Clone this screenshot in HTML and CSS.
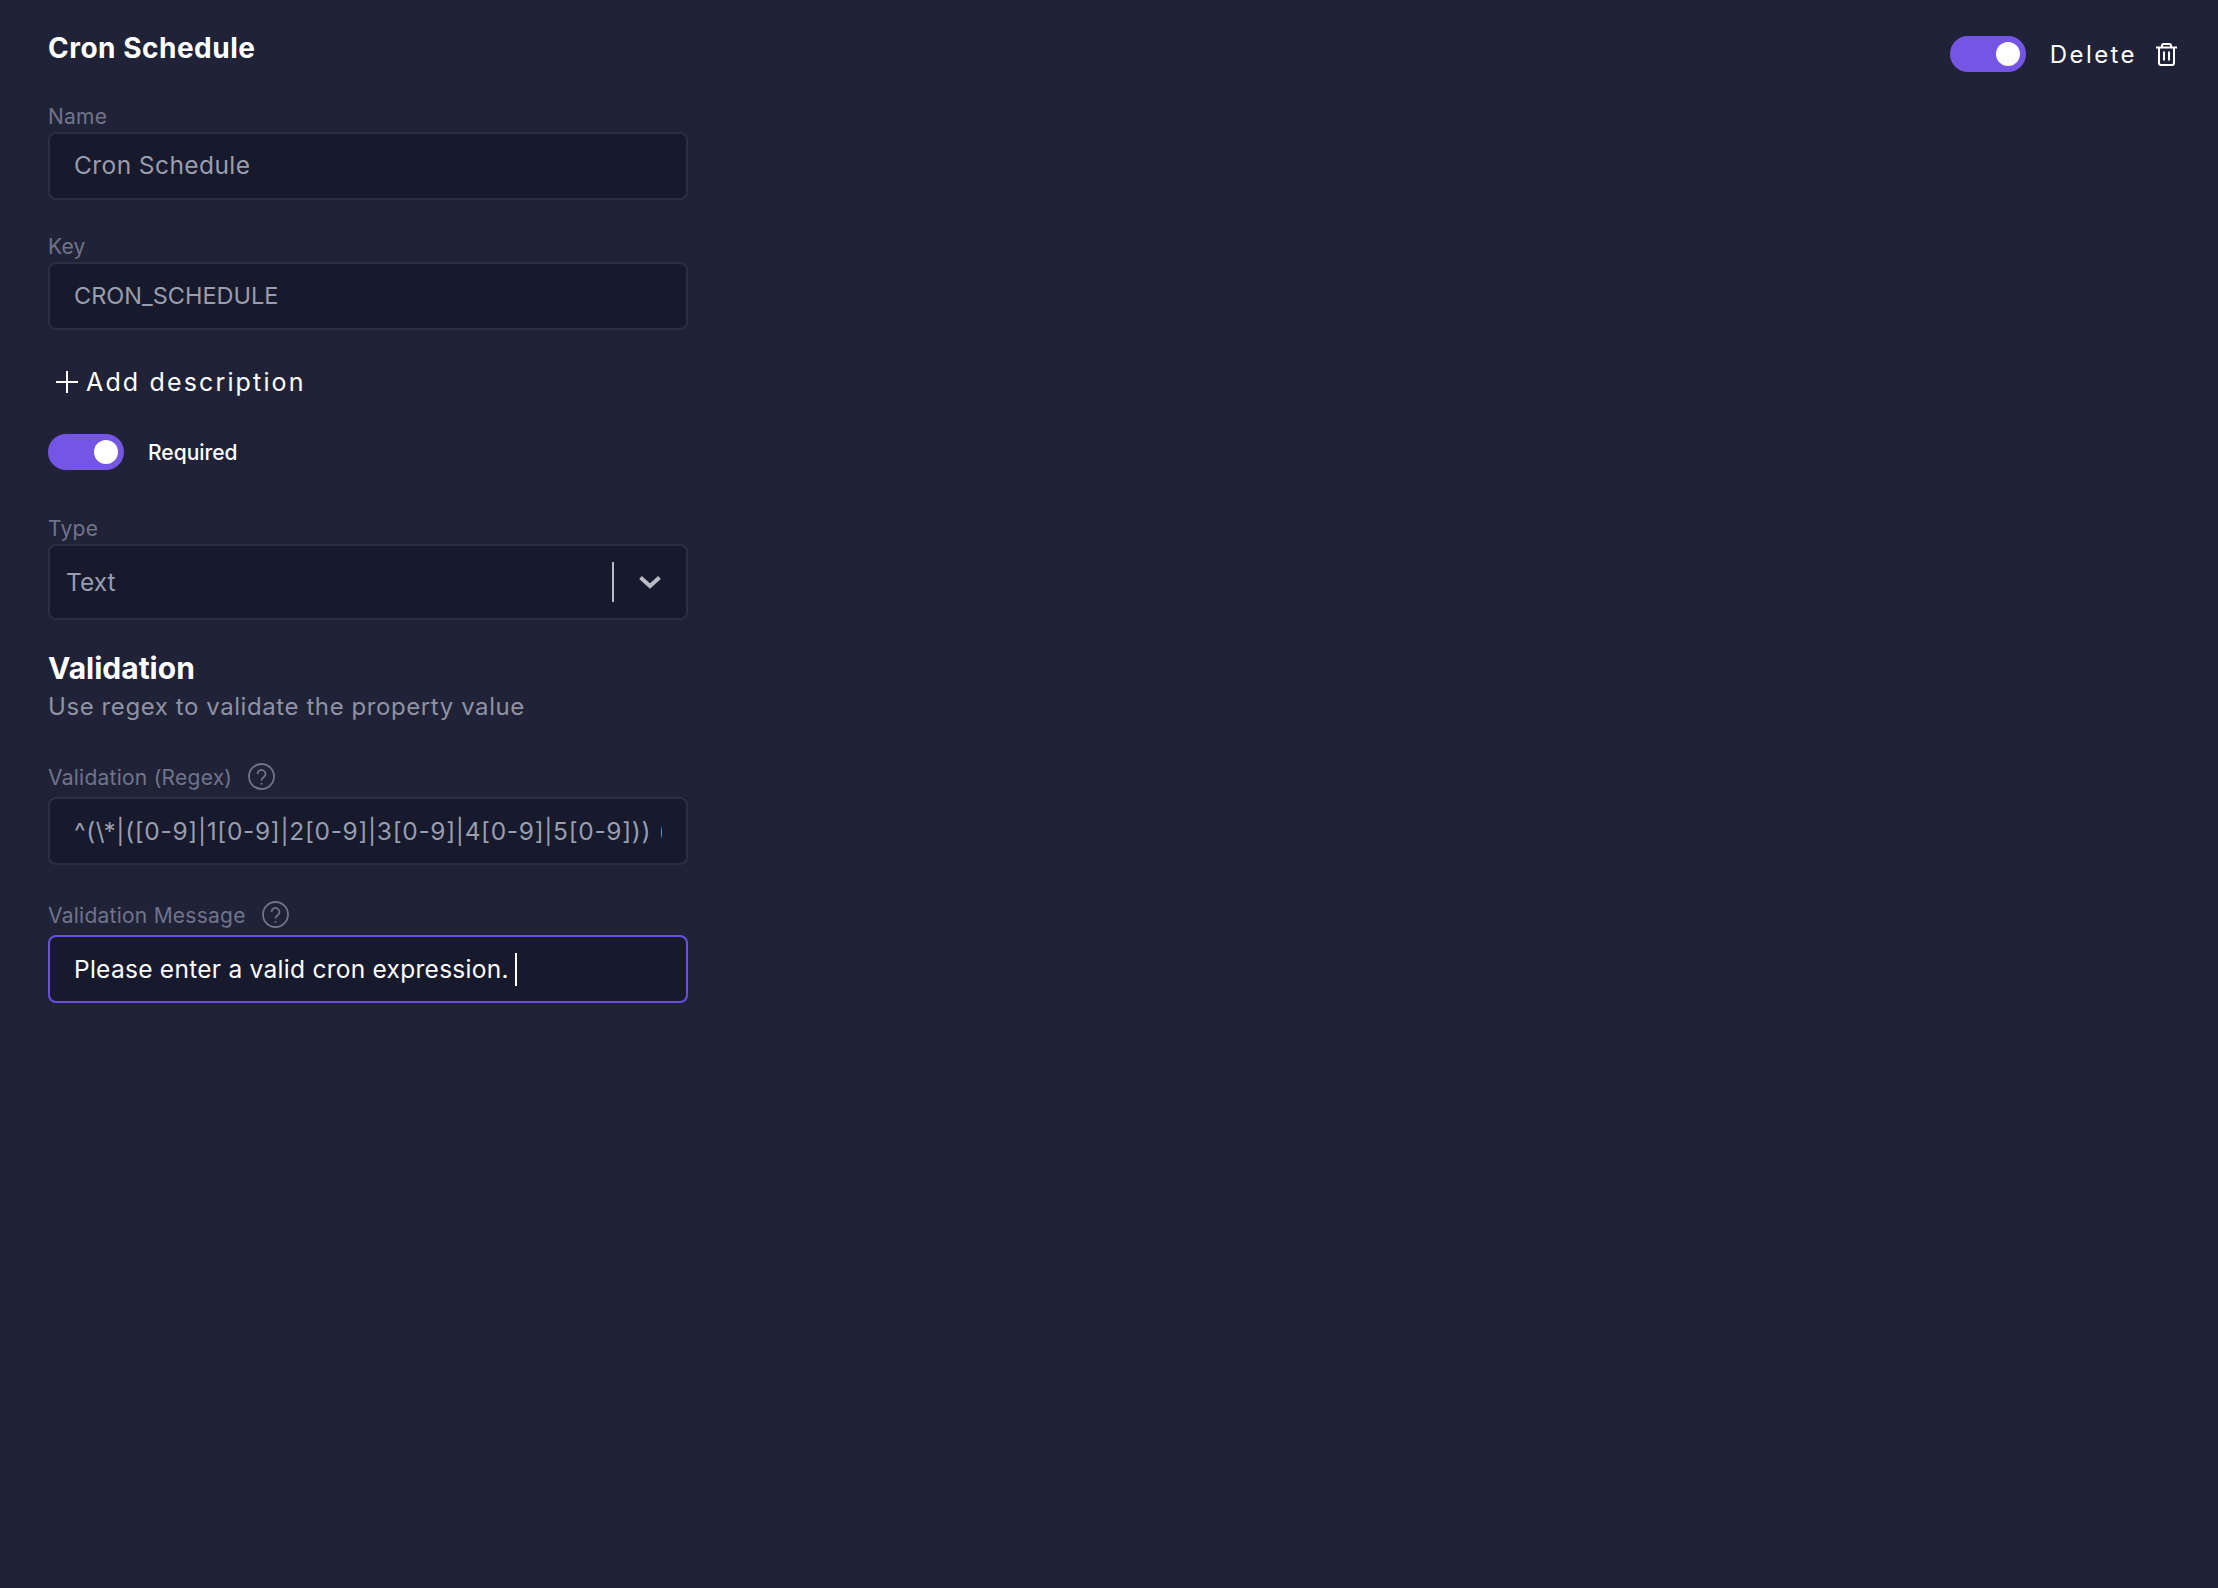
FILE: index.html
```html
<!DOCTYPE html>
<html lang="en">
<head>
<meta charset="utf-8">
<title>Cron Schedule</title>
<link rel="stylesheet" href="styles.css">
</head>
<body>
<main class="page">
  <form class="form">
    <h1 class="title">Cron Schedule</h1>
    <div class="field first">
      <div class="label">Name</div>
      <div class="input">Cron Schedule</div>
    </div>
    <div class="field">
      <div class="label">Key</div>
      <div class="input upper">CRON_SCHEDULE</div>
    </div>
    <div class="add">
      <svg class="plus" viewBox="0 0 22 22" aria-hidden="true"><path d="M11 0v22M0 11h22"/></svg>
      <span>Add description</span>
    </div>
    <div class="required">
      <span class="toggle"><span class="knob"></span></span>
      <span class="required-text">Required</span>
    </div>
    <div class="type">
      <div class="label">Type</div>
      <div class="select">
        <span class="select-value">Text</span>
        <span class="select-sep"></span>
        <svg class="chevron" viewBox="0 0 24 14" aria-hidden="true"><path d="M2.500 2.500 12 11l9.500-8.500"/></svg>
      </div>
    </div>
    <h2 class="section">Validation</h2>
    <p class="sub">Use regex to validate the property value</p>
    <div class="hint-field regex">
      <div class="label-row">
        <span class="label">Validation (Regex)</span>
        <svg class="help" viewBox="0 0 27 27" aria-hidden="true"><circle cx="13.500" cy="13.500" r="12.500"/><path d="M9.500 11a4 4 0 1 1 6.200 3.300c-1.500 1-2.200 1.700-2.200 3.200"/><path d="M13.500 20v1.600"/></svg>
      </div>
      <div class="input regex-input"><span class="clip">^(\*|([0-9]|1[0-9]|2[0-9]|3[0-9]|4[0-9]|5[0-9])) (\*|</span></div>
    </div>
    <div class="hint-field message">
      <div class="label-row">
        <span class="label">Validation Message</span>
        <svg class="help" viewBox="0 0 27 27" aria-hidden="true"><circle cx="13.500" cy="13.500" r="12.500"/><path d="M9.500 11a4 4 0 1 1 6.200 3.300c-1.500 1-2.200 1.700-2.200 3.200"/><path d="M13.500 20v1.600"/></svg>
      </div>
      <div class="input focused">Please enter a valid cron expression.<span class="caret"></span></div>
    </div>
  </form>
  <div class="actions">
    <span class="toggle"><span class="knob"></span></span>
    <span class="delete">Delete</span>
    <svg class="trash" viewBox="0 0 21 23" aria-hidden="true"><path d="M0 4.500h21M6 4.500V2.500C6 1.700 6.700 1 7.500 1h6c.8 0 1.500.7 1.500 1.500v2M3 4.500V20c0 1.100.9 2 2 2h11c1.100 0 2-.9 2-2V4.500M8 8.500v9M13 8.500v9"/></svg>
  </div>
</main>
</body>
</html>
```
FILE: styles.css
```css
* { box-sizing: border-box; }
html, body { margin: 0; height: 100%; background: #202337; }
body { font-family: "Inter", "Noto Sans", sans-serif; }
.page {
  display: flex;
  justify-content: space-between;
  align-items: flex-start;
  height: 1588px;
  padding: 0 41px 0 48px;
  overflow: hidden;
  background: #202337;
}
.form { width: 640px; display: flex; flex-direction: column; padding-top: 28px; }
.title { margin: 0; font-size: 28px; line-height: 40px; font-weight: 700; color: #fff; letter-spacing: .5px; }
.field { margin-top: 32px; }
.field.first { margin-top: 34px; }
.label { display: block; font-size: 21px; line-height: 28px; color: #70748a; letter-spacing: .25px; }
.field .label { line-height: 30px; }
.input {
  height: 68px;
  display: flex;
  align-items: center;
  padding: 0 24px 2px;
  background: #161a2c;
  border: 2px solid #2b2f44;
  border-radius: 8px;
  font-size: 24.500px;
  letter-spacing: .42px;
  color: #9a9dad;
  white-space: nowrap;
  overflow: hidden;
}
.input.upper { font-size: 23.500px; letter-spacing: 0; }
.clip { display: block; overflow: hidden; width: 100%; letter-spacing: .67px; padding-top: 1px; }
.add { display: flex; align-items: center; height: 32px; margin-top: 36px; padding-left: 8px; gap: 8px; color: #fff; font-size: 25px; font-weight: 400; letter-spacing: 2.150px; }
.plus { width: 22px; height: 22px; flex: none; fill: none; stroke: #fff; stroke-width: 2; }
.required { display: flex; align-items: center; gap: 24px; margin-top: 36px; }
.toggle { display: flex; align-items: center; justify-content: flex-end; width: 76px; height: 36px; padding-right: 6px; border-radius: 18px; background: #7556e4; flex: none; }
.knob { width: 24px; height: 24px; border-radius: 50%; background: #fff; }
.required-text { font-size: 21px; font-weight: 500; color: #fff; }
.type { margin-top: 45px; }
.type .label { margin-bottom: 1px; }
.select { height: 76px; display: flex; align-items: center; padding: 0 24px 0 16px; background: #161a2c; border: 2px solid #2b2f44; border-radius: 8px; }
.select-value { flex: 1; font-size: 24.500px; color: #9a9dad; }
.select-sep { width: 2px; height: 40px; background: #b9bbc6; margin-right: 24px; }
.chevron { width: 24px; height: 14px; fill: none; stroke: #b9bbc6; stroke-width: 4; }
.section { margin: 28px 0 0; font-size: 30px; line-height: 40px; font-weight: 700; color: #fff; }
.sub { margin: 3px 0 0; font-size: 24px; line-height: 32px; color: #8f92a3; letter-spacing: .58px; }
.hint-field { margin-top: 34px; }
.hint-field.regex { margin-top: 38px; }
.label-row { display: flex; align-items: center; gap: 16px; height: 34px; margin-bottom: 2px; }
.help { width: 27px; height: 27px; margin-bottom: 3px; flex: none; fill: none; stroke: #70748a; stroke-width: 1.800; }
.input.focused { border-color: #6a4fe0; color: #fff; letter-spacing: .27px; padding-bottom: 0; }
.caret { width: 2px; height: 33px; margin-left: 6px; background: #fff; flex: none; }
.actions { display: flex; align-items: center; margin-top: 36px; }
.delete { margin-left: 24px; font-size: 24px; font-weight: 400; letter-spacing: 2.400px; color: #fff; }
.trash { width: 21px; height: 23px; margin-left: 19px; fill: none; stroke: #fff; stroke-width: 2; }
```
